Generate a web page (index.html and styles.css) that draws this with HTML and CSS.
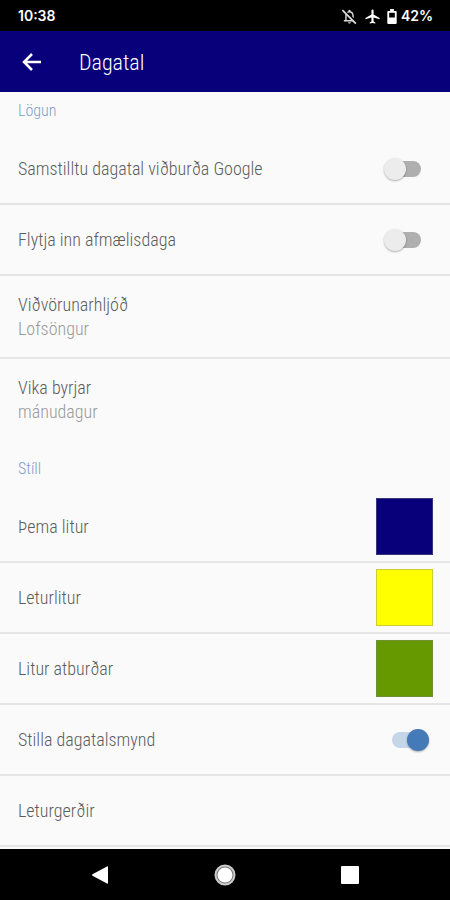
FILE: index.html
```html
<!DOCTYPE html>
<html lang="is">
	<head>
		<meta charset="UTF-8" />
		<meta name="viewport" content="width=device-width, initial-scale=1.0" />
		<title>Dagatal</title>
		<link rel="stylesheet" href="styles.css">
	</head>

	<body>
		<div class="status">
			<span class="status__time">10:38</span>
			<div class="status__icons">
				<!--notifications off-->
				<svg class="status__icon" viewBox="0 0 24 24" aria-hidden="true">
					<path
						fill="#ddd"
						d="M12 22a2 2 0 0 0 2-2h-4a2 2 0 0 0 2 2zM6 9.500V17H4v2h14l-2-2H8v-6c0-.5.1-1 .3-1.500L6.700 8C6.300 8.500 6 9 6 9.500zM18 14.500V11c0-3.100-1.600-5.600-4.500-6.300V4a1.500 1.500 0 0 0-3 0v.7c-.8.2-1.500.5-2.100.9l1.500 1.500C10.500 6.700 11.200 6.500 12 6.500c2.500 0 4 2 4 4.500v1.500z"
					/>
					<path stroke="#ddd" stroke-width="2.500" d="M2 3l19 19" />
				</svg>
				<!--airplane mode-->
				<svg class="status__icon" viewBox="0 0 24 24" aria-hidden="true">
					<path
						fill="#fff"
						d="M22 16v-2l-8.500-5V3.500a1.500 1.500 0 0 0-3 0V9L2 14v2l8.500-2.500V19L8 20.500V22l4-1 4 1v-1.500L13.500 19v-5.500z"
					/>
				</svg>
				<svg class="status__battery" viewBox="0 0 10 16" aria-hidden="true">
					<path
						fill="#fff"
						fill-rule="evenodd"
						d="M3 0h4v2h2a1 1 0 0 1 1 1v12a1 1 0 0 1-1 1H1a1 1 0 0 1-1-1V3a1 1 0 0 1 1-1h2zM2 4v5h6V4z"
					/>
				</svg>
				<span class="status__level">42%</span>
			</div>
		</div>

		<header class="appbar">
			<button class="appbar__back" type="button" aria-label="Til baka">
				<svg class="appbar__arrow" viewBox="0 0 20 18" aria-hidden="true">
					<path
						fill="none"
						stroke="#fff"
						stroke-width="2.500"
						d="M19 9H2M10 1L2 9l8 8"
					/>
				</svg>
			</button>
			<h1 class="appbar__title">Dagatal</h1>
		</header>

		<main class="settings">
			<section class="group">
				<h2 class="group__title">Lögun</h2>
				<label class="row">
					<span class="row__label">Samstilltu dagatal viðburða Google</span>
					<input class="switch" type="checkbox" role="switch" />
				</label>
				<label class="row">
					<span class="row__label">Flytja inn afmælisdaga</span>
					<input class="switch" type="checkbox" role="switch" />
				</label>
				<button class="row row--double" type="button">
					<span class="row__label">Viðvörunarhljóð</span>
					<span class="row__value">Lofsöngur</span>
				</button>
				<button class="row row--double row--last" type="button">
					<span class="row__label">Vika byrjar</span>
					<span class="row__value">mánudagur</span>
				</button>
			</section>

			<section class="group">
				<h2 class="group__title">Stíll</h2>
				<button class="row" type="button">
					<span class="row__label">Þema litur</span>
					<span class="swatch swatch--theme"></span>
				</button>
				<button class="row" type="button">
					<span class="row__label">Leturlitur</span>
					<span class="swatch swatch--text"></span>
				</button>
				<button class="row" type="button">
					<span class="row__label">Litur atburðar</span>
					<span class="swatch swatch--event"></span>
				</button>
				<label class="row">
					<span class="row__label">Stilla dagatalsmynd</span>
					<input class="switch" type="checkbox" role="switch" checked />
				</label>
				<button class="row" type="button">
					<span class="row__label">Leturgerðir</span>
				</button>
			</section>
		</main>

		<nav class="navbar">
			<button class="navbar__button" type="button" aria-label="Til baka">
				<svg class="navbar__icon" viewBox="0 0 22 22" aria-hidden="true">
					<path fill="#fff" d="M20 3v16q0 1-1 .5L4.500 11.700q-1-.7 0-1.400L19 2.500q1-.5 1 .5z" />
				</svg>
			</button>
			<button class="navbar__button" type="button" aria-label="Heim">
				<svg class="navbar__icon" viewBox="0 0 22 22" aria-hidden="true">
					<circle cx="11" cy="11" r="9.500" fill="#777" stroke="#ccc" stroke-width="2" />
					<circle cx="11" cy="11" r="7.500" fill="#fff" />
				</svg>
			</button>
			<button class="navbar__button" type="button" aria-label="Nýleg forrit">
				<svg class="navbar__icon" viewBox="0 0 22 22" aria-hidden="true">
					<rect x="1" y="2" width="18" height="18" rx="1" fill="#fff" />
				</svg>
			</button>
		</nav>
	</body>
</html>
```

FILE: styles.css
```css
:root {
	--theme: #08007b;
	--accent: #457ab8;
	--line: #e5e5e5;
	--side: 18px;
}
* {
	box-sizing: border-box;
}
body {
	background-color: #fafafa;
	display: flex;
	flex-direction: column;
	font-family: "Roboto Condensed", Roboto, sans-serif;
	font-weight: 300;
	margin: 0;
	min-height: 100vh;
}
button {
	appearance: none;
	background: transparent;
	border: 0;
	color: inherit;
	cursor: pointer;
	font: inherit;
	padding: 0;
}

/*status bar*/
.status {
	align-items: center;
	background-color: #000;
	color: #fff;
	display: flex;
	font-family: Inter, Roboto, sans-serif;
	font-size: 14px;
	font-weight: 600;
	justify-content: space-between;
	line-height: 30px;
	padding: 1px 17px 0 var(--side);
}
.status__icons {
	align-items: center;
	display: flex;
}
.status__icon {
	height: 17px;
	margin-right: 6px;
	width: 17px;
}
.status__battery {
	height: 15px;
	margin-right: 4px;
	width: 10px;
}

/*app bar*/
.appbar {
	align-items: center;
	background-color: var(--theme);
	color: #fff;
	display: flex;
	gap: 35px;
	height: 61px;
	padding: 2px 20px 0;
}
.appbar__back {
	display: flex;
	padding: 2px 2px 4px;
}
.appbar__arrow {
	height: 18px;
	width: 20px;
}
.appbar__title {
	font-size: 22px;
	font-weight: 300;
	line-height: 32px;
	margin: 0;
}

/*settings list*/
.settings {
	flex: 1;
}
.group + .group {
	margin-top: 10px;
}
.group__title {
	color: #7f9ccb;
	font-size: 16px;
	font-weight: 300;
	line-height: 20px;
	margin: 0;
	padding: 9px var(--side) 13px;
}
.row {
	align-items: center;
	border-bottom: 2px solid var(--line);
	color: #5c5c5c;
	cursor: pointer;
	display: flex;
	font-size: 18px;
	justify-content: space-between;
	line-height: 24px;
	min-height: 71px;
	padding: 0 17px 0 var(--side);
	text-align: left;
	width: 100%;
}
.row--double {
	align-items: flex-start;
	flex-direction: column;
	justify-content: flex-start;
	padding-bottom: 16px;
	padding-top: 17px;
}
.row--last {
	border-bottom: 0;
}
.row__value {
	color: #999;
}

.switch {
	appearance: none;
	cursor: pointer;
	height: 24px;
	margin: 0 12px 0 0;
	position: relative;
	width: 37px;
}
/*track*/
.switch::before {
	background-color: #afafaf;
	border-radius: 8px;
	content: "";
	height: 16px;
	position: absolute;
	right: 0;
	top: 4px;
	width: 32px;
}
/*thumb*/
.switch::after {
	background-color: #ececec;
	border-radius: 50%;
	box-shadow: 0 1px 2px rgba(0, 0, 0, 0.3);
	content: "";
	height: 22px;
	left: 0;
	position: absolute;
	top: 1px;
	width: 22px;
}
.switch:checked {
	margin-right: 4px;
}
.switch:checked::before {
	background-color: #c5d6e9;
	left: 0;
}
.switch:checked::after {
	background-color: var(--accent);
	left: auto;
	right: 0;
}

.swatch {
	border: 1px solid rgba(128, 128, 128, 0.4);
	height: 57px;
	width: 57px;
}
.swatch--theme {
	background-color: var(--theme);
}
.swatch--text {
	background-color: #ff0;
}
.swatch--event {
	background-color: #690;
}

/*navigation bar*/
.navbar {
	align-items: center;
	background-color: #000;
	display: flex;
	height: 51px;
	justify-content: center;
}
.navbar__button {
	display: flex;
	justify-content: center;
	width: 28%;
}
.navbar__icon {
	height: 22px;
	width: 22px;
}
```
